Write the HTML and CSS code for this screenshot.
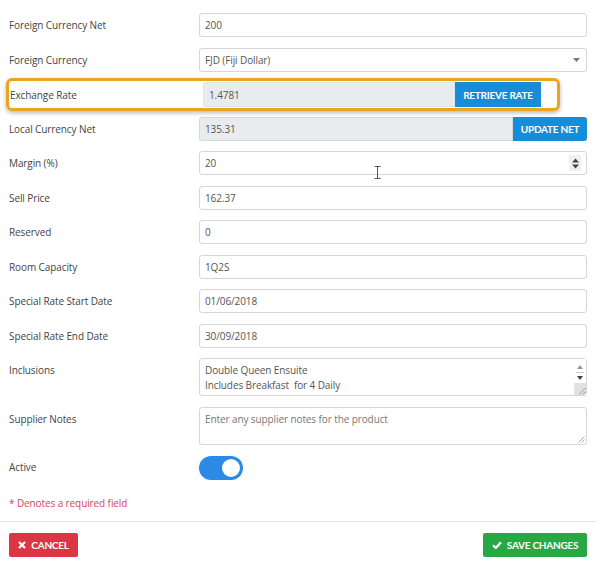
FILE: index.html
```html
<!DOCTYPE html>
<html>
<head>
<meta charset="utf-8">
<link rel="stylesheet" href="styles.css">
</head>
<body>
<div class="form">
  <div class="row"><label class="lbl">Foreign Currency Net</label><input class="field" value="200"></div>
  <div class="row"><label class="lbl">Foreign Currency</label>
    <div class="field select"><span>FJD (Fiji Dollar)</span><svg class="caret" width="7" height="4" viewBox="0 0 7 4"><path d="M0 0h7L3.5 4z" fill="#777"/></svg></div>
  </div>
  <div class="row highlight"><label class="lbl">Exchange Rate</label>
    <div class="group"><input class="field ro" value="1.4781" readonly><button class="btn blue">RETRIEVE RATE</button></div>
  </div>
  <div class="row"><label class="lbl">Local Currency Net</label>
    <div class="group"><input class="field ro" value="135.31" readonly><button class="btn blue">UPDATE NET</button></div>
  </div>
  <div class="row"><label class="lbl">Margin (%)</label>
    <div class="wrap"><input class="field" value="20">
      <span class="spin"><svg width="7" height="11" viewBox="0 0 7 11"><path d="M0 4.5L3.5 0.5L7 4.5z M0 6.5L3.5 10.5L7 6.5z" fill="#444"/></svg></span>
      <svg class="ibeam" width="7" height="13" viewBox="0 0 7 13"><path d="M0.5 0.5h6M3.5 0.5v12M0.5 12.5h6" stroke="#555" stroke-width="1" fill="none"/></svg>
    </div>
  </div>
  <div class="row"><label class="lbl">Sell Price</label><input class="field" value="162.37"></div>
  <div class="row"><label class="lbl">Reserved</label><input class="field" value="0"></div>
  <div class="row"><label class="lbl">Room Capacity</label><input class="field" value="1Q2S"></div>
  <div class="row"><label class="lbl">Special Rate Start Date</label><input class="field" value="01/06/2018"></div>
  <div class="row"><label class="lbl">Special Rate End Date</label><input class="field" value="30/09/2018"></div>
  <div class="row top"><label class="lbl">Inclusions</label>
    <div class="wrap">
      <div class="field area incl">Double Queen Ensuite<br>Includes Breakfast&nbsp; for 4 Daily</div>
      <div class="sbar">
        <svg class="sb-up" width="6" height="4" viewBox="0 0 6 4"><path d="M0 4L3 0L6 4z" fill="#999"/></svg>
        <span class="sb-line"></span>
        <svg class="sb-dn" width="6" height="4" viewBox="0 0 6 4"><path d="M0 0L3 4L6 0z" fill="#444"/></svg>
        <span class="sb-grip"><svg width="9" height="9" viewBox="0 0 9 9"><path d="M8.5 2L2 8.5M8.5 5.5L5.5 8.5" stroke="#999" stroke-width="1"/></svg></span>
      </div>
    </div>
  </div>
  <div class="row top"><label class="lbl">Supplier Notes</label>
    <div class="wrap">
      <div class="field area notes"><span class="ph">Enter any supplier notes for the product</span></div>
      <svg class="grip" width="8" height="8" viewBox="0 0 8 8"><path d="M7.5 1.5L1.5 7.5M7.5 4.5L4.5 7.5" stroke="#aaa" stroke-width="1"/></svg>
    </div>
  </div>
  <div class="row"><label class="lbl">Active</label><div class="toggle"><span class="knob"></span></div></div>
  <div class="req">* Denotes a required field</div>
</div>
<div class="footer">
  <button class="btn red"><svg width="8" height="8" viewBox="0 0 8 8"><path d="M1 1L7 7M7 1L1 7" stroke="#fff" stroke-width="2.2"/></svg>CANCEL</button>
  <button class="btn green"><svg width="10" height="8" viewBox="0 0 10 8"><path d="M1 4.2L3.8 7L9 1.2" stroke="#fff" stroke-width="2.2" fill="none"/></svg>SAVE CHANGES</button>
</div>
</body>
</html>
```

FILE: styles.css
```css
body {
  margin: 0;
  background: #fff;
  font-family: "Open Sans", "Noto Sans", sans-serif;
  font-size: 10px;
  letter-spacing: -0.1px;
  color: #444;
}
.form {
  padding: 13px 9px 0;
  display: flex;
  flex-direction: column;
  gap: 10.5px;
}
.row {
  display: flex;
  align-items: center;
  height: 24px;
}
.row.top {
  align-items: flex-start;
  height: auto;
}
.row.top .lbl {
  padding-top: 5px;
}
.lbl {
  width: 190px;
  flex: none;
}
.field {
  flex: 1;
  min-width: 0;
  height: 24px;
  box-sizing: border-box;
  border: 1px solid #d6d6d6;
  border-radius: 3px;
  padding: 0 5px;
  font: inherit;
  letter-spacing: inherit;
  color: #555;
  background: #fff;
  outline: none;
}
.select {
  display: flex;
  align-items: center;
  justify-content: space-between;
  padding-right: 6px;
}
.group {
  flex: 1;
  display: flex;
  height: 24px;
}
.field.ro {
  background: #e9ecef;
  border-radius: 3px 0 0 3px;
}
.btn {
  border: none;
  font-family: Lato, "Open Sans", sans-serif;
  font-weight: 700;
  font-size: 10px;
  letter-spacing: -0.25px;
  color: #fff;
  height: 24px;
  padding: 0 6px;
  display: inline-flex;
  align-items: center;
  gap: 5px;
  border-radius: 2px;
  white-space: nowrap;
  flex: none;
}
.blue {
  background: #168ddb;
  border-radius: 0 3px 3px 0;
  width: 74px;
  justify-content: center;
}
.highlight {
  margin: -4px 0 -5px -3px;
  width: 547px;
  border: 3px solid #eaa41f;
  border-radius: 6px;
  padding: 1px 0 0 1px;
  box-shadow: 0 2px 4px rgba(0, 0, 0, 0.28);
  align-items: flex-start;
  height: 26px;
}
.highlight .lbl {
  width: 193px;
  align-self: center;
  margin-top: -1px;
}
.highlight .group {
  flex: none;
  width: 338px;
  height: 25px;
}
.highlight .field {
  height: 25px;
  border-color: #e3e3e3;
}
.highlight .blue {
  width: 86px;
  height: 25px;
  border-radius: 0;
}
.wrap {
  flex: 1;
  position: relative;
  display: flex;
}
.spin {
  position: absolute;
  right: 6px;
  top: 4px;
  width: 12px;
  height: 16px;
  background: #f0f0f0;
  display: flex;
  align-items: center;
  justify-content: center;
}
.ibeam {
  position: absolute;
  left: 175px;
  top: 15px;
}
.area {
  height: auto;
  line-height: 15px;
  padding: 4px 5px;
}
.incl {
  height: 38px;
  overflow: hidden;
}
.notes {
  height: 38px;
}
.ph {
  color: #777;
}
.sbar {
  position: absolute;
  right: 1px;
  top: 1px;
  bottom: 1px;
  width: 12px;
  background: #fff;
  display: flex;
  flex-direction: column;
  align-items: center;
}
.sb-up {
  margin-top: 6px;
}
.sb-line {
  width: 8px;
  height: 1px;
  background: #ccc;
  margin-top: 3px;
}
.sb-dn {
  margin-top: 3px;
}
.sb-grip {
  margin-top: auto;
  width: 12px;
  height: 12px;
  background: #e2e2e2;
  display: flex;
  align-items: flex-end;
  justify-content: flex-end;
}
.grip {
  position: absolute;
  right: 2px;
  bottom: 2px;
}
.toggle {
  width: 44px;
  height: 24px;
  border-radius: 12px;
  background: #2a8ae6;
  position: relative;
  margin-top: 1px;
}
.knob {
  position: absolute;
  right: 3px;
  top: 3px;
  width: 18px;
  height: 18px;
  border-radius: 50%;
  background: #fff;
}
.req {
  color: #d9445a;
  font-size: 10px;
  margin-top: 6px;
  line-height: 15px;
}
.footer {
  margin-top: 10px;
  border-top: 1px solid #e3e3e3;
  padding: 11px 9px;
  display: flex;
  justify-content: space-between;
}
.red {
  background: #dc3545;
  width: 69px;
  justify-content: center;
}
.green {
  background: #28a745;
  width: 104px;
  justify-content: center;
}
```
